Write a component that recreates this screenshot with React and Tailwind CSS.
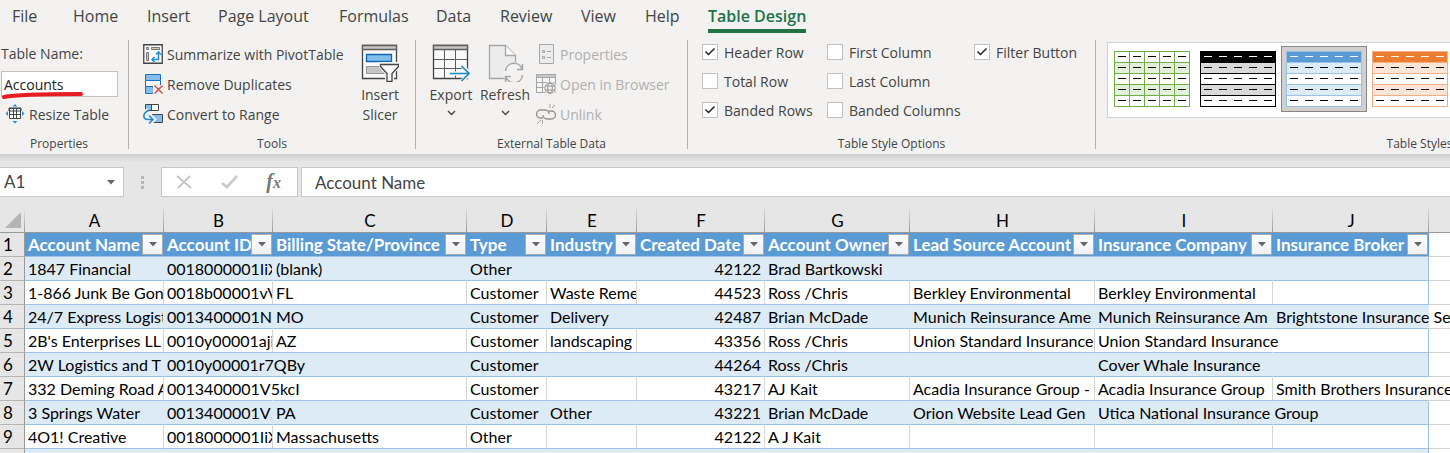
import clsx from 'clsx';

const tabs = [
  { label: 'File', width: 'w-[61px]' },
  { label: 'Home', width: 'w-[74px]' },
  { label: 'Insert', width: 'w-[71px]' },
  { label: 'Page Layout', width: 'w-[121px]' },
  { label: 'Formulas', width: 'w-[97px]' },
  { label: 'Data', width: 'w-[64px]' },
  { label: 'Review', width: 'w-[81px]' },
  { label: 'View', width: 'w-[64px]' },
  { label: 'Help', width: 'w-[63px]' },
];

const styleOptions = [
  [
    { label: 'Header Row', checked: true },
    { label: 'Total Row', checked: false },
    { label: 'Banded Rows', checked: true },
  ],
  [
    { label: 'First Column', checked: false },
    { label: 'Last Column', checked: false },
    { label: 'Banded Columns', checked: false },
  ],
  [{ label: 'Filter Button', checked: true }],
];

const tableStyles = [
  { name: 'Green grid', line: '#70ad47', head: '#fff', band: '#e2efda', dash: '#000', grid: true },
  { name: 'Black', line: '#000', head: '#000', band: '#d9d9d9', dash: '#fff' },
  { name: 'Blue', line: '#9bc2e6', head: '#5b9bd5', band: '#ddebf7', dash: '#fff', selected: true },
  { name: 'Orange', line: '#f4b084', head: '#ed7d31', band: '#fce4d6', dash: '#fff' },
];

const columns = [
  { letter: 'A', name: 'Account Name', width: 'w-[139px]' },
  { letter: 'B', name: 'Account ID', width: 'w-[109px]' },
  { letter: 'C', name: 'Billing State/Province', width: 'w-[194px]' },
  { letter: 'D', name: 'Type', width: 'w-[80px]' },
  { letter: 'E', name: 'Industry', width: 'w-[90px]' },
  { letter: 'F', name: 'Created Date', width: 'w-[128px]' },
  { letter: 'G', name: 'Account Owner', width: 'w-[145px]' },
  { letter: 'H', name: 'Lead Source Account', width: 'w-[185px]' },
  { letter: 'I', name: 'Insurance Company', width: 'w-[178px]' },
  { letter: 'J', name: 'Insurance Broker', width: 'w-[156px]' },
];

const rows = [
  ['1847 Financial', '0018000001IiX', '(blank)', 'Other', '', '42122', 'Brad Bartkowski', '', '', ''],
  ['1-866 Junk Be Gon', '0018b00001vV', 'FL', 'Customer', 'Waste Reme', '44523', 'Ross /Chris', 'Berkley Environmental', 'Berkley Environmental', ''],
  ['24/7 Express Logist', '0013400001N2', 'MO', 'Customer', 'Delivery', '42487', 'Brian McDade', 'Munich Reinsurance Ame', 'Munich Reinsurance Am', 'Brightstone Insurance Ser'],
  ["2B's Enterprises LL", '0010y00001aji', 'AZ', 'Customer', 'landscaping', '43356', 'Ross /Chris', 'Union Standard Insurance', 'Union Standard Insurance', ''],
  ['2W Logistics and T', '0010y00001r7QBy', '', 'Customer', '', '44264', 'Ross /Chris', '', 'Cover Whale Insurance', ''],
  ['332 Deming Road A', '0013400001V5kcI', '', 'Customer', '', '43217', 'AJ Kait', 'Acadia Insurance Group -', 'Acadia Insurance Group', 'Smith Brothers Insurance'],
  ['3 Springs Water', '0013400001V5', 'PA', 'Customer', 'Other', '43221', 'Brian McDade', 'Orion Website Lead Gen', 'Utica National Insurance Group', ''],
  ['4O1! Creative', '0018000001IiX', 'Massachusetts', 'Other', '', '42122', 'A J Kait', '', '', ''],
  ['', '', '', '', '', '', '', '', '', ''],
];

// cells whose text runs on over the empty cell to the right
const spilling = [
  '0010y00001r7QBy',
  '0013400001V5kcI',
  'Brightstone Insurance Ser',
  'Smith Brothers Insurance',
  'Utica National Insurance Group',
];

const spills = (row, col) =>
  spilling.includes(row[col]) || (col === 8 && row[col] === 'Union Standard Insurance');

function Icon({ size = 20, className, children }) {
  return (
    <svg
      width={size}
      height={size}
      viewBox={`0 0 ${size} ${size}`}
      fill="none"
      className={clsx('shrink-0', className)}
      aria-hidden="true"
    >
      {children}
    </svg>
  );
}

function ResizeIcon() {
  return (
    <Icon>
      <path d="M4.5 4.5h11v10h-11z" fill="#fff" stroke="#444" />
      <path d="M4 4h12v3H4zM4.5 10.5h11M8.5 5v10M11.5 5v10" stroke="#444" />
      <path
        d="M10 0l2.500 2.500h-5zM10 19.500l2.500-2.500h-5zM0.500 9.500L3 7v5zM19.500 9.500L17 7v5z"
        fill="#2e8fd0"
      />
    </Icon>
  );
}

function PivotIcon() {
  return (
    <Icon>
      <path d="M.75.75h18.5v18.5H.75z" fill="#fafafa" stroke="#444" strokeWidth="1.300" />
      <path
        d="M3.500 3.500h2v2h-2zM8.500 3.500h8v2h-8zM3.500 8.500h2v8h-2z"
        fill="#c8c6c4"
        stroke="#797775"
      />
      <path d="M9.500 15.500h6v-7" stroke="#1e8bcd" strokeWidth="1.500" />
      <path
        d="M13 10.500l2.500-2.500 2.500 2.500M11.500 13L9 15.500l2.500 2.500"
        stroke="#1e8bcd"
        strokeWidth="1.500"
      />
    </Icon>
  );
}

function DuplicatesIcon() {
  return (
    <Icon>
      <path d="M2.500.5h15v6h-15z" fill="#83beec" stroke="#1e6fb8" />
      <path d="M2.500 6.500h15v6h-15z" fill="#fafafa" stroke="#1e6fb8" />
      <path d="M2.500 12.500h7l2 3-2 4h-7z" fill="#83beec" stroke="#1e6fb8" />
      <path d="M10 11h10v9H10z" fill="#f3f2f1" />
      <path d="M11.500 11.500l8 8M19.500 11.500l-8 8" stroke="#e8413c" strokeWidth="1.400" />
    </Icon>
  );
}

function ConvertIcon() {
  return (
    <Icon>
      <path d="M2.500.5h13v6h-13z" fill="#fff" stroke="#444" />
      <path d="M3 1h5v5H3z" fill="#83beec" />
      <path d="M8.500.5v6" stroke="#444" />
      <path d="M9.500 10.500h10v8h-10z" fill="#83beec" stroke="#444" />
      <path d="M5 6C0 8 0 15 5 15.500h5M7 11.500l4 4-4 4" stroke="#f3f2f1" strokeWidth="4" />
      <path
        d="M5.500 6.500C-.5 9-.5 15 4.500 15.500h5M6 11.500l4 4-4 4"
        stroke="#1e8bcd"
        strokeWidth="1.500"
      />
    </Icon>
  );
}

function SlicerIcon() {
  return (
    <Icon size={38}>
      <path d="M1.500 1.500h34v33h-34z" fill="#fafafa" stroke="#444" strokeWidth="1.300" />
      <path d="M1.500 1.500h34v4h-34z" fill="#c8c6c4" stroke="#605e5c" strokeWidth="1.300" />
      <path d="M5.500 10.500h25v7h-25z" fill="#83beec" stroke="#0f66b5" strokeWidth="1.300" />
      <path d="M5.500 22.500h20v7h-20z" fill="#c8c6c4" stroke="#979593" />
      <path
        d="M19.500 19.500h18v3l-6 7v8h-6v-8l-6-7z"
        fill="#fafafa"
        stroke="#f3f2f1"
        strokeWidth="3"
      />
      <path
        d="M19.500 20.500h18v2l-6.500 7v8h-5v-8l-6.500-7z"
        fill="#fafafa"
        stroke="#444"
        strokeWidth="1.300"
      />
    </Icon>
  );
}

function ExportIcon() {
  return (
    <Icon size={38}>
      <path d="M1.500 1.500h34v33h-34z" fill="#fafafa" stroke="#444" strokeWidth="1.300" />
      <path d="M1.500 1.500h34v4h-34z" fill="#c8c6c4" stroke="#605e5c" strokeWidth="1.300" />
      <path d="M2 15.500h33M2 24.500h33M12.500 6v28M23.500 6v28" stroke="#605e5c" />
      <path d="M18 29.500h19M29 21l9 8.500-9 8.500" stroke="#f3f2f1" strokeWidth="4" />
      <path
        d="M18 29.500h19M29.500 22l7.500 7.500-7.500 7.500"
        stroke="#1e8bcd"
        strokeWidth="1.600"
      />
    </Icon>
  );
}

function RefreshIcon() {
  return (
    <Icon size={38}>
      <path d="M3.500 1.500h16l10 10v23h-26z" fill="#ececec" stroke="#a6a6a6" strokeWidth="1.300" />
      <path d="M19.500 1.500v10h10" fill="#fafafa" stroke="#a6a6a6" strokeWidth="1.300" />
      <circle cx="28" cy="29" r="11" fill="#f3f2f1" />
      <path
        d="M19.500 27a8.500 8.500 0 0 1 16.500-2M36.500 20v5.500H31M36.500 31a8.500 8.500 0 0 1-16.500 2M19.500 38v-5.500H25"
        stroke="#a6a6a6"
        strokeWidth="1.500"
      />
    </Icon>
  );
}

function PropertiesIcon() {
  return (
    <Icon>
      <path d="M3.500.5h14v19h-14z" fill="#ececec" stroke="#a6a6a6" />
      <path d="M6.500 6.500h2v2h-2zM6.500 12.500h2v2h-2zM11 7.500h4M11 13.500h4" stroke="#a6a6a6" />
    </Icon>
  );
}

function BrowserIcon() {
  return (
    <Icon>
      <path d="M.5.5h19v18H.5z" fill="#f5f5f5" stroke="#a6a6a6" />
      <path d="M.5.5h19v3H.5z" fill="#c8c6c4" stroke="#a6a6a6" />
      <path d="M1 8.500h18M1 13.500h18M6.500 4v15M13.500 4v15" stroke="#a6a6a6" />
      <circle cx="14" cy="14" r="6.500" fill="#f3f2f1" />
      <circle cx="14" cy="14" r="5.200" stroke="#979593" />
      <ellipse cx="14" cy="14" rx="2.300" ry="5.200" stroke="#979593" />
      <path d="M9.500 12h9M9.500 16h9" stroke="#979593" />
    </Icon>
  );
}

function UnlinkIcon() {
  return (
    <Icon>
      <path
        d="M7 14H4.500a4 4 0 0 1 0-8H9a4 4 0 0 1 4 4M12 7h3.500a4 4 0 0 1 0 8H11a4 4 0 0 1-4-4"
        stroke="#979593"
        strokeWidth="1.400"
      />
      <path d="M14 0v4M19 1l-3 3M5 16l-4 4M6.500 16v4" stroke="#a6a6a6" />
    </Icon>
  );
}

function Chevron() {
  return (
    <svg width="9" height="6" viewBox="0 0 9 6" fill="none" aria-hidden="true">
      <path d="M1 1l3.500 3.500L8 1" stroke="#444" strokeWidth="1.400" />
    </svg>
  );
}

function Arrow() {
  return (
    <svg width="8" height="5" viewBox="0 0 8 5" aria-hidden="true">
      <path d="M0 0h8L4 4.500z" fill="#666" />
    </svg>
  );
}

function Group({ title, className, children }) {
  return (
    <section
      className={clsx(
        'flex h-[109px] shrink-0 flex-col justify-between border-r border-[#b3b0ad]',
        className
      )}
    >
      <div className="flex">{children}</div>
      <h2 className="text-center text-[12px] leading-[10px]">{title}</h2>
    </section>
  );
}

function SmallButton({ icon, label, disabled }) {
  return (
    <button
      type="button"
      disabled={disabled}
      className="flex h-7 items-center gap-1 whitespace-nowrap disabled:text-[#b1afad]"
    >
      {icon}
      {label}
    </button>
  );
}

function LargeButton({ icon, label, className, dropdown }) {
  return (
    <button
      type="button"
      className={clsx('flex flex-col items-center pt-1 leading-5', className)}
    >
      {icon}
      <span className="mt-[3px]">{label}</span>
      {dropdown && (
        <span className="mt-[5px]">
          <Chevron />
        </span>
      )}
    </button>
  );
}

function Checkbox({ label, checked }) {
  return (
    <label className="flex h-6 items-center gap-[6px] whitespace-nowrap">
      <span className="relative flex size-4">
        <input
          type="checkbox"
          defaultChecked={checked}
          className="peer size-4 appearance-none border border-[#c3c1bf] bg-white"
        />
        <svg
          viewBox="0 0 16 16"
          fill="none"
          className="pointer-events-none absolute inset-0 hidden peer-checked:block"
          aria-hidden="true"
        >
          <path d="M3.500 7.500l3 3 6-6" stroke="#222" strokeWidth="1.500" />
        </svg>
      </span>
      {label}
    </label>
  );
}

function StyleThumb({ tableStyle }) {
  const { name, line, head, band, dash, grid, selected } = tableStyle;
  const fills = [head, band, '#fff', band, '#fff'];

  return (
    <button
      type="button"
      aria-label={name}
      className={clsx(
        'flex h-[66px] w-[86px] shrink-0 items-center justify-center border',
        selected ? 'border-[#8a8886] bg-[#d2d0ce]' : 'border-transparent'
      )}
    >
      <svg width="76" height="56" viewBox="0 0 76 56" shapeRendering="crispEdges">
        {fills.map((fill, i) => (
          <g key={i}>
            <rect x="0.5" y={i * 11 + 0.5} width="75" height="11" fill={fill} stroke={line} />
            <path
              d={`M4 ${i * 11 + 5.5}h68`}
              stroke={i === 0 ? dash : '#000'}
              strokeDasharray="8 7"
            />
          </g>
        ))}
        {grid && <path d="M15.500 0v56M30.500 0v56M45.500 0v56M60.500 0v56" stroke={line} />}
      </svg>
    </button>
  );
}

function Ribbon() {
  return (
    <header className="overflow-hidden bg-[#f3f2f1] font-['Open_Sans',sans-serif] text-[14px] text-[#444]">
      <nav className="flex h-10 pl-3 text-[16px] leading-8">
        {tabs.map((tab) => (
          <a key={tab.label} href="#" className={clsx('shrink-0 whitespace-nowrap', tab.width)}>
            {tab.label}
          </a>
        ))}
        <a
          href="#"
          className="h-[33px] shrink-0 whitespace-nowrap border-b-4 border-[#217346] font-semibold text-[#217346]"
        >
          Table Design
        </a>
      </nav>

      <div className="flex pb-[5px]">
        <Group title="Properties" className="w-[129px] pr-[10px]">
          <div className="flex w-full flex-col gap-[2px] pl-px">
            <label htmlFor="table-name" className="h-7 leading-7">
              Table Name:
            </label>
            <div className="relative h-7 pt-px">
              <input
                id="table-name"
                defaultValue="Accounts"
                className="block h-[26px] w-full border border-[#c3c1bf] bg-white pl-[2px] text-[#222]"
              />
              <svg
                width="84"
                height="8"
                viewBox="0 0 84 8"
                fill="none"
                className="pointer-events-none absolute top-[21px] left-0"
                aria-hidden="true"
              >
                <path
                  d="M3 6C14 3.500 40 3 80 3"
                  stroke="#e81b23"
                  strokeWidth="4"
                  strokeLinecap="round"
                />
              </svg>
            </div>
            <div className="pl-1">
              <SmallButton icon={<ResizeIcon />} label="Resize Table" />
            </div>
          </div>
        </Group>

        <Group title="Tools" className="w-[287px]">
          <div className="flex w-[213px] flex-col gap-[2px] pl-[14px]">
            <SmallButton icon={<PivotIcon />} label="Summarize with PivotTable" />
            <SmallButton icon={<DuplicatesIcon />} label="Remove Duplicates" />
            <SmallButton icon={<ConvertIcon />} label="Convert to Range" />
          </div>
          <LargeButton icon={<SlicerIcon />} label="Insert Slicer" className="ml-[11px] w-[54px]" />
        </Group>

        <Group title="External Table Data" className="w-[272px]">
          <LargeButton icon={<ExportIcon />} label="Export" className="ml-2 w-[54px]" dropdown />
          <LargeButton icon={<RefreshIcon />} label="Refresh" className="w-[54px]" dropdown />
          <div className="flex flex-col gap-[2px] pl-1">
            <SmallButton icon={<PropertiesIcon />} label="Properties" disabled />
            <SmallButton icon={<BrowserIcon />} label="Open in Browser" disabled />
            <SmallButton icon={<UnlinkIcon />} label="Unlink" disabled />
          </div>
        </Group>

        <Group title="Table Style Options" className="w-[408px]">
          <div className="grid grid-cols-[125px_147px_1fr] pl-[14px]">
            {styleOptions.map((options, i) => (
              <div key={i} className="flex flex-col gap-[5px]">
                {options.map((option) => (
                  <Checkbox key={option.label} {...option} />
                ))}
              </div>
            ))}
          </div>
        </Group>

        <Group title="Table Styles" className="w-[648px]">
          <div className="mt-[2px] ml-[11px] flex h-[76px] w-[600px] border border-[#d2d0ce] bg-white pt-[3px] pl-px">
            {tableStyles.map((tableStyle) => (
              <StyleThumb key={tableStyle.name} tableStyle={tableStyle} />
            ))}
          </div>
        </Group>
      </div>
    </header>
  );
}

function FormulaBar() {
  return (
    <div className="flex h-[55px] items-start bg-[linear-gradient(#cfcfcf,#e6e6e6_8px)] pt-[13px] font-['Lato',sans-serif] text-[17px] text-[#444]">
      <div className="flex h-[30px] w-[124px] shrink-0 items-center border border-l-0 border-[#c6c6c6] bg-white pr-2">
        <input aria-label="Name box" defaultValue="A1" className="min-w-0 grow pl-1" />
        <button type="button" aria-label="Show names">
          <Arrow />
        </button>
      </div>
      <div className="flex h-[30px] w-[37px] shrink-0 flex-col items-center justify-center gap-[2px]">
        <span className="size-[3px] bg-[#b5b5b5]" />
        <span className="size-[3px] bg-[#b5b5b5]" />
        <span className="size-[3px] bg-[#b5b5b5]" />
      </div>
      <div className="flex h-[30px] w-[137px] shrink-0 items-center justify-between border border-[#c6c6c6] bg-white pr-4 pl-[14px]">
        <button type="button" aria-label="Cancel">
          <svg width="16" height="14" viewBox="0 0 16 14" fill="none">
            <path d="M1 1l14 12M14 1L2 13" stroke="#c3c3c3" strokeWidth="1.800" />
          </svg>
        </button>
        <button type="button" aria-label="Enter">
          <svg width="17" height="14" viewBox="0 0 17 14" fill="none">
            <path d="M1 8l5 4L16 1" stroke="#cbcbcb" strokeWidth="2.800" />
          </svg>
        </button>
        <button
          type="button"
          className="font-['Liberation_Serif',serif] text-[20px] leading-6 font-bold text-[#777] italic"
        >
          f<span className="text-[16px]">x</span>
        </button>
      </div>
      <input
        aria-label="Formula bar"
        defaultValue="Account Name"
        className="ml-[3px] h-[30px] min-w-0 grow border border-r-0 border-[#c6c6c6] bg-white pl-[13px]"
      />
    </div>
  );
}

function RowNumber({ children }) {
  return (
    <th
      scope="row"
      className="border-r border-b border-r-[#999] border-b-[#b5b5b5] bg-[#e6e6e6] py-0 pr-0 pl-[3px] text-left text-[17px] font-normal"
    >
      {children}
    </th>
  );
}

function Sheet() {
  return (
    <table className="w-full min-w-[1440px] table-fixed border-separate border-spacing-0 bg-white font-['Lato',sans-serif] text-[16px] text-black">
      <colgroup>
        <col className="w-[25px]" />
        {columns.map((column) => (
          <col key={column.letter} className={column.width} />
        ))}
        <col />
      </colgroup>
      <thead>
        <tr className="h-6 bg-[#e6e6e6] text-[17px] leading-[22px]">
          <td className="border-b border-[#999] bg-[linear-gradient(#e6e6e6,#999)] bg-[length:1px_100%] bg-right bg-no-repeat p-0">
            <svg width="17" height="17" viewBox="0 0 17 17" className="ml-1" aria-hidden="true">
              <path d="M17 0v16H1z" fill="#b4b4b4" />
            </svg>
          </td>
          {columns.map((column) => (
            <th
              key={column.letter}
              className="border-b border-[#999] bg-[linear-gradient(#dadada,#999)] bg-[length:1px_100%] bg-right bg-no-repeat p-0 font-normal"
            >
              {column.letter}
            </th>
          ))}
          <td className="border-b border-[#999] p-0" />
        </tr>
      </thead>
      <tbody className="leading-[22px]">
        <tr className="h-6">
          <RowNumber>1</RowNumber>
          {columns.map((column) => (
            <th
              key={column.letter}
              className="border-b border-[#9bc2e6] bg-[#5b9bd5] p-0 text-left text-[17px] font-bold text-white"
            >
              <div className="flex h-[23px] items-center justify-between pr-px pl-[3px]">
                <span className="min-w-0 whitespace-nowrap">{column.name}</span>
                <button
                  type="button"
                  aria-label={`Filter ${column.name}`}
                  className="flex size-[21px] shrink-0 items-center justify-center border border-[#ababab] bg-linear-to-b from-white to-[#eef0f5]"
                >
                  <Arrow />
                </button>
              </div>
            </th>
          ))}
          <td className="border-b border-[#d4d4d4] p-0" />
        </tr>
        {rows.map((row, i) => (
          <tr key={i} className="h-6">
            <RowNumber>{i + 2}</RowNumber>
            {row.map((value, col) => (
              <td
                key={col}
                className={clsx(
                  'border-r border-b border-b-[#9bc2e6] py-0 pl-[3px] whitespace-nowrap',
                  i % 2 === 0 && 'bg-[#ddebf7]',
                  spills(row, col)
                    ? 'border-r-transparent'
                    : col === 9
                      ? 'overflow-hidden border-r-[#9bc2e6]'
                      : i % 2 === 0
                        ? 'overflow-hidden border-r-[#ddebf7]'
                        : 'overflow-hidden border-r-[#d4d4d4]',
                  col === 5 ? 'pr-[3px] text-right' : 'pr-0'
                )}
              >
                {value}
              </td>
            ))}
            <td className="border-b border-[#d4d4d4] p-0" />
          </tr>
        ))}
      </tbody>
    </table>
  );
}

function App() {
  return (
    <div className="h-screen overflow-hidden bg-[#e6e6e6]">
      <Ribbon />
      <FormulaBar />
      <Sheet />
    </div>
  );
}

export default App;
